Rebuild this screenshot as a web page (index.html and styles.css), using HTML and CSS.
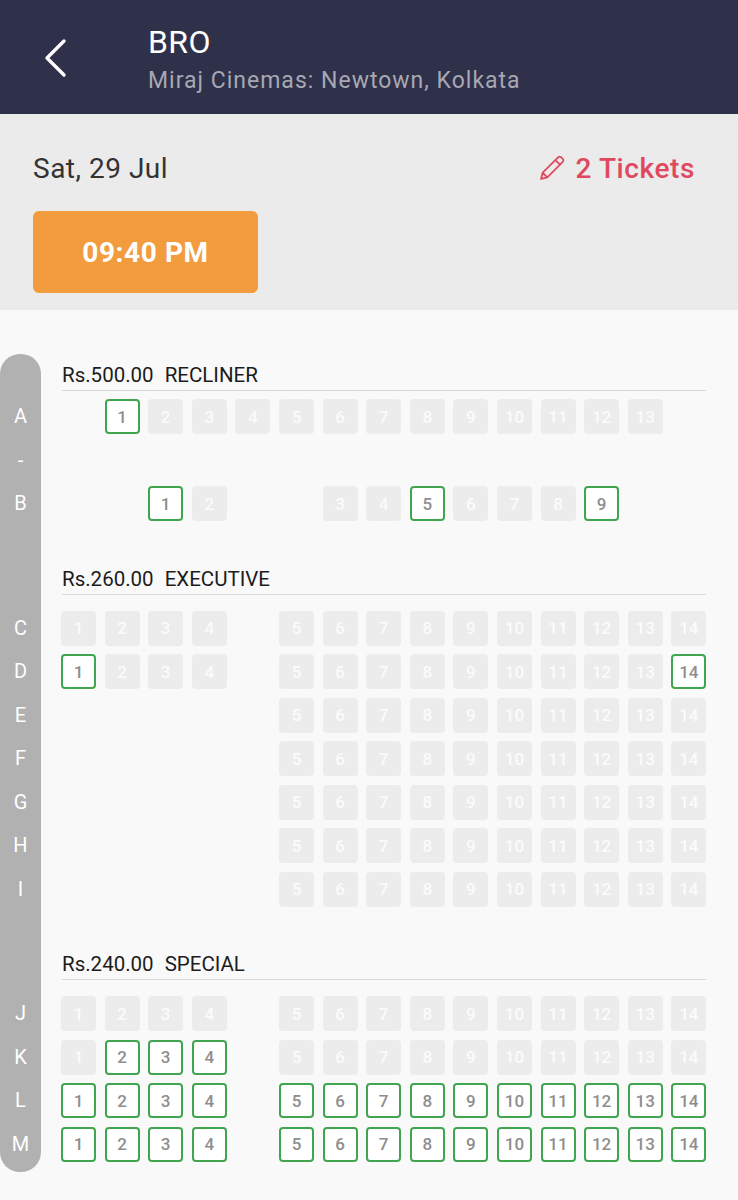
FILE: index.html
```html
<!DOCTYPE html>
<html lang="en">
<head>
    <meta charset="UTF-8">
    <meta name="viewport" content="width=device-width, initial-scale=1.0">
    <title>BRO - Select seats</title>
    <link rel="stylesheet" href="styles.css">
</head>
<body>
    <header class="topbar">
        <button class="back-btn" aria-label="Back">
            <svg width="24" height="40" viewBox="0 0 24 40">
                <polyline points="20,3 3,20 20,37" fill="none" stroke="#fff" stroke-width="3.4" stroke-linecap="round" stroke-linejoin="round"/>
            </svg>
        </button>
        <div class="title-block">
            <h1>BRO</h1>
            <p>Miraj Cinemas: Newtown, Kolkata</p>
        </div>
    </header>

    <section class="show-info">
        <div class="date-row">
            <span class="date">Sat, 29 Jul</span>
            <span class="tickets">
                <svg width="28" height="28" viewBox="0 0 24 24">
                    <path d="M17.2 2.8a1.9 1.9 0 0 1 2.7 0l1.3 1.3a1.9 1.9 0 0 1 0 2.7L8 20 2.6 21.4 4 16z M14.8 5.2l4 4 M4 16l4 4" fill="none" stroke="#e0485f" stroke-width="1.5" stroke-linejoin="round" stroke-linecap="round"/>
                </svg>
                2 Tickets
            </span>
        </div>
        <button class="showtime">09:40 PM</button>
    </section>

    <main class="seat-map">
        <div class="layout" id="layout">
            <div class="rail" id="rail"></div>
        </div>
    </main>

    <script>
        // col = position in the 15 column grid, n = seat number
        function range(colStart, numStart, count) {
            const seats = [];
            for (let i = 0; i < count; i++) seats.push({ col: colStart + i, n: numStart + i });
            return seats;
        }
        const fullRow = () => range(0, 1, 4).concat(range(5, 5, 10));
        const all = [1,2,3,4,5,6,7,8,9,10,11,12,13,14];

        const sections = [
            { price: "Rs.500.00", name: "RECLINER", first: true, rows: [
                { label: "A", seats: range(1, 1, 13), open: [1] },
                { label: "-", seats: [], open: [] },
                { label: "B", seats: range(2, 1, 2).concat(range(6, 3, 7)), open: [1, 5, 9] }
            ]},
            { price: "Rs.260.00", name: "EXECUTIVE", rows: [
                { label: "C", seats: fullRow(), open: [] },
                { label: "D", seats: fullRow(), open: [1, 14] },
                { label: "E", seats: range(5, 5, 10), open: [] },
                { label: "F", seats: range(5, 5, 10), open: [] },
                { label: "G", seats: range(5, 5, 10), open: [] },
                { label: "H", seats: range(5, 5, 10), open: [] },
                { label: "I", seats: range(5, 5, 10), open: [] }
            ]},
            { price: "Rs.240.00", name: "SPECIAL", rows: [
                { label: "J", seats: fullRow(), open: [] },
                { label: "K", seats: fullRow(), open: [2, 3, 4] },
                { label: "L", seats: fullRow(), open: all },
                { label: "M", seats: fullRow(), open: all }
            ]}
        ];

        const layout = document.getElementById("layout");
        let html = "";
        let gridRow = 1;
        sections.forEach(sec => {
            html += `<div class="section-head${sec.first ? " first" : ""}" style="grid-row: ${gridRow}">
                        <span>${sec.price}</span><span>${sec.name}</span>
                     </div>`;
            gridRow++;
            sec.rows.forEach(row => {
                html += `<div class="row-label" style="grid-row: ${gridRow}">${row.label}</div>`;
                html += `<div class="seat-row" style="grid-row: ${gridRow}">`;
                row.seats.forEach(s => {
                    const cls = row.open.includes(s.n) ? "seat open" : "seat";
                    html += `<span class="${cls}" style="grid-column: ${s.col + 1}">${s.n}</span>`;
                });
                html += `</div>`;
                gridRow++;
            });
        });
        layout.insertAdjacentHTML("beforeend", html);
        document.getElementById("rail").style.gridRow = `1 / ${gridRow}`;
    </script>
</body>
</html>
```

FILE: styles.css
```css
* {
    box-sizing: border-box;
}

body {
    margin: 0;
    font-family: Roboto, "Liberation Sans", Arial, sans-serif;
    background: #f9f9f9;
    color: #222;
}

/* header */
.topbar {
    height: 114px;
    background: #2f3049;
    display: flex;
    align-items: center;
    padding-left: 44px;
}

.back-btn {
    background: none;
    border: none;
    padding: 0;
    margin: 2px 0 0 0;
    width: 104px;
    text-align: left;
    cursor: pointer;
    line-height: 0;
}

.title-block {
    margin-top: 4px;
}

.title-block h1 {
    margin: 0;
    font-size: 32px;
    font-weight: 400;
    letter-spacing: 0.4px;
    color: #ffffff;
    line-height: 36px;
}

.title-block p {
    margin: 7px 0 0 0;
    font-size: 23px;
    letter-spacing: 1px;
    color: #a7a8b3;
    line-height: 28px;
}

/* date + time */
.show-info {
    background: #ebebeb;
    padding: 38px 43px 17px 33px;
}

.date-row {
    display: flex;
    justify-content: space-between;
    align-items: center;
    height: 32px;
}

.date {
    font-size: 28px;
    letter-spacing: 0.5px;
    color: #333;
}

.tickets {
    display: flex;
    align-items: center;
    gap: 9px;
    font-size: 28px;
    letter-spacing: 0.6px;
    color: #e0485f;
    font-weight: 500;
}

.showtime {
    margin-top: 27px;
    width: 225px;
    height: 82px;
    border: none;
    border-radius: 6px;
    background: #f39c3d;
    color: #ffffff;
    font-family: inherit;
    font-size: 28px;
    letter-spacing: 0.6px;
    font-weight: 700;
    cursor: pointer;
}

/* seat map */
.seat-map {
    padding: 44px 32px 30px 0;
}

.layout {
    display: grid;
    grid-template-columns: 41px 1fr;
    column-gap: 20px;
}

.rail {
    grid-column: 1;
    background: #b1b1b1;
    border-radius: 20px;
    margin-bottom: -2px;
}

.section-head {
    grid-column: 2;
    padding-top: 37px;
    padding-bottom: 3px;
    border-bottom: 1px solid #d9d9d9;
    margin-bottom: 16px;
    font-size: 20.5px;
    line-height: 24px;
    color: #1c1c1c;
    display: flex;
    gap: 11px;
    margin-left: 1px;
}

.section-head.first {
    padding-top: 9px;
    margin-bottom: 8px;
}

.row-label {
    grid-column: 1;
    height: 43.5px;
    line-height: 35px;
    text-align: center;
    color: #ffffff;
    font-size: 20px;
}

.seat-row {
    grid-column: 2;
    height: 43.5px;
    display: grid;
    grid-template-columns: repeat(15, 35px);
    column-gap: 8.6px;
    align-items: start;
}

.seat {
    grid-row: 1;
    height: 35px;
    border-radius: 4px;
    background: #ececec;
    color: #fbfbfb;
    font-size: 17px;
    font-weight: 500;
    display: flex;
    align-items: center;
    justify-content: center;
}

.seat.open {
    background: #ffffff;
    border: 2px solid #41a550;
    color: #8e8e8e;
}
```
